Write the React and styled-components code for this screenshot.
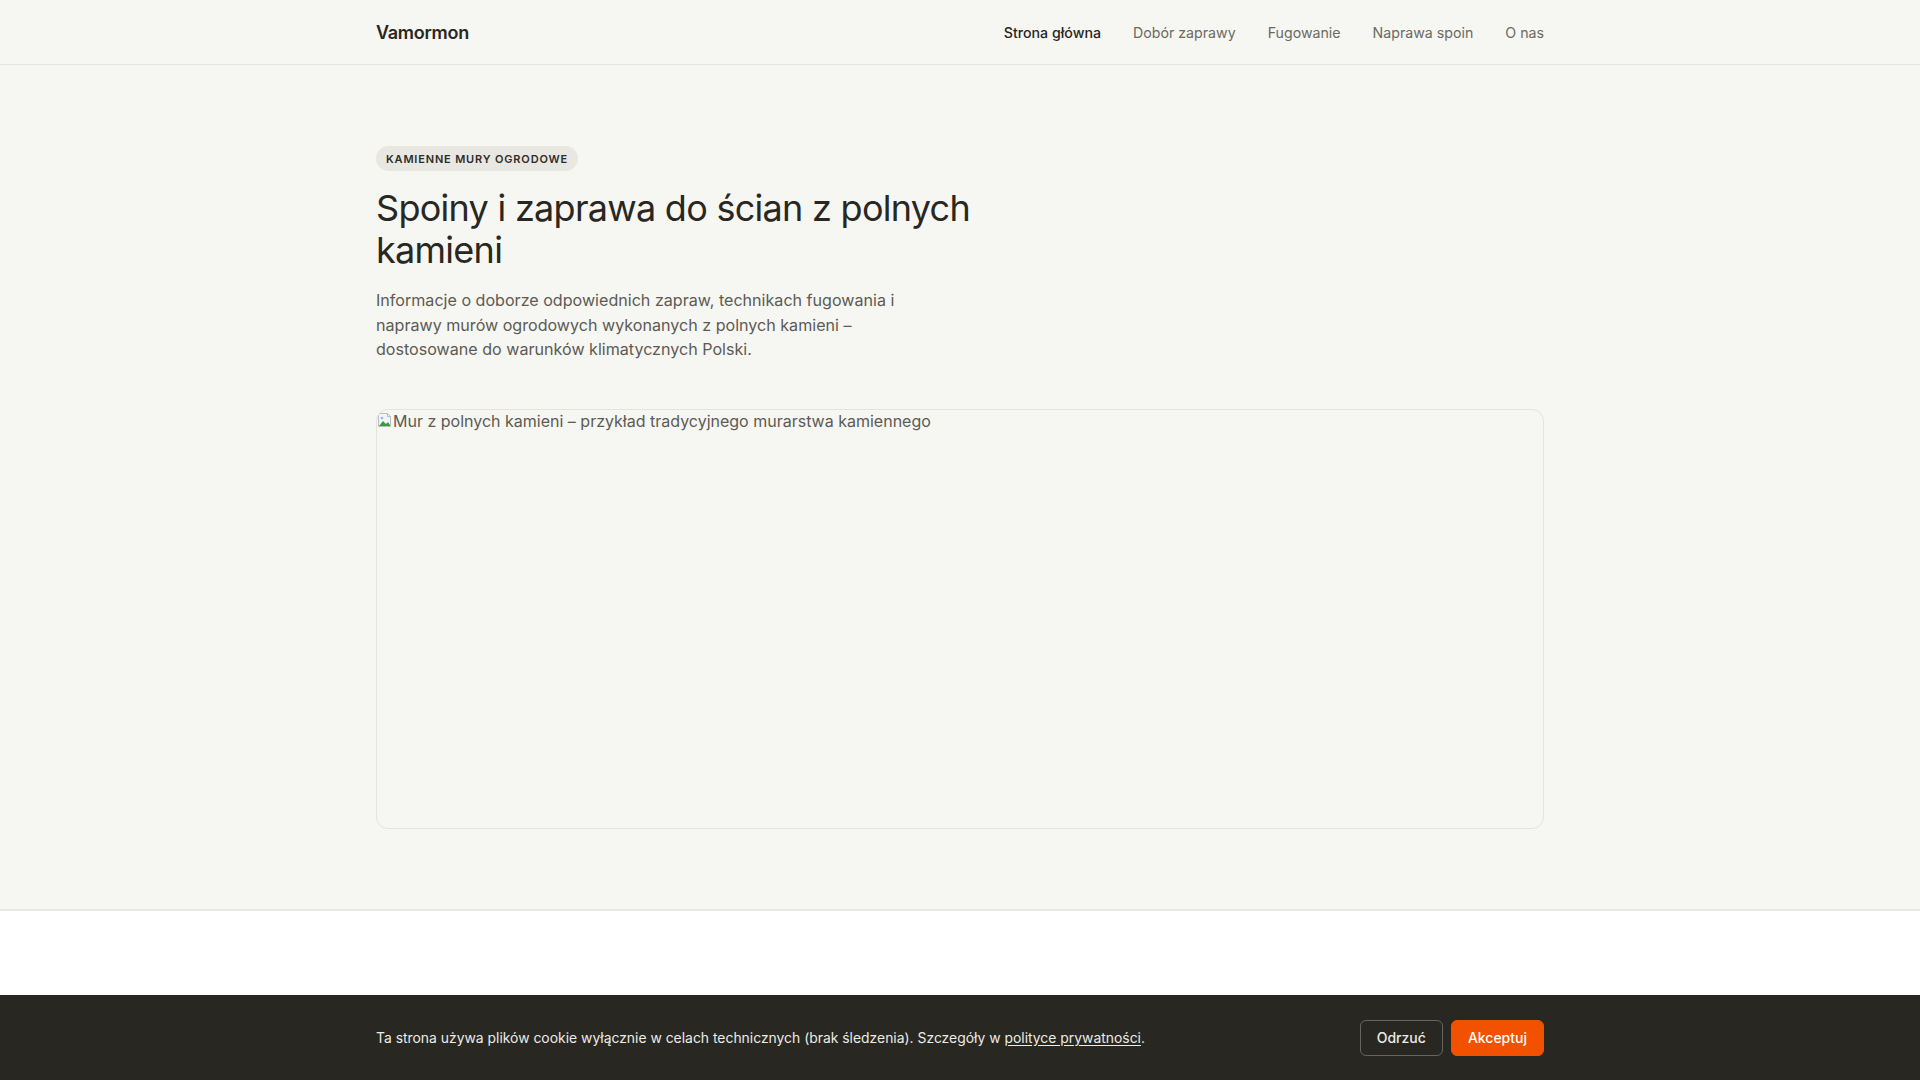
import React from "react";
import styled, { createGlobalStyle } from "styled-components";

const Global = createGlobalStyle`
  *, *::before, *::after { box-sizing: border-box; }
  html, body { margin: 0; padding: 0; }
  body {
    background: #f6f6f2;
    color: #282722;
    font-family: Inter, "Noto Sans", "Liberation Sans", sans-serif;
    -webkit-font-smoothing: antialiased;
  }
`;

const Page = styled.div`
  min-height: 100vh;
  display: flex;
  flex-direction: column;
`;

const Container = styled.div`
  width: 1168px;
  margin: 0 auto;
`;

const Header = styled.header`
  border-bottom: 1px solid #e4e3dd;
`;

const HeaderInner = styled(Container)`
  height: 64px;
  padding-top: 1px;
  display: flex;
  align-items: center;
  justify-content: space-between;
`;

const Logo = styled.a`
  font-size: 18px;
  font-weight: 600;
  color: #282722;
  text-decoration: none;
  letter-spacing: -0.015em;
`;

const Nav = styled.nav`
  display: flex;
  gap: 32px;
`;

const NavLink = styled.a`
  font-size: 14.2px;
  color: ${(p) => (p.$active ? "#282722" : "#6b6a62")};
  font-weight: ${(p) => (p.$active ? 450 : 400)};
  text-decoration: none;
`;

const Main = styled.main`
  padding: 81px 0 80px;
`;

const Badge = styled.span`
  display: inline-flex;
  align-items: center;
  height: 25px;
  padding: 0 10px;
  border-radius: 999px;
  background: #e8e7e2;
  font-size: 11px;
  font-weight: 600;
  letter-spacing: 0.075em;
  text-transform: uppercase;
  color: #2e2d28;
`;

const Title = styled.h1`
  margin: 16px 0 0;
  max-width: 680px;
  font-size: 36px;
  font-weight: 400;
  line-height: 42px;
  letter-spacing: -0.02em;
  color: #282722;
`;

const Lead = styled.p`
  margin: 17px 0 0;
  max-width: 570px;
  font-size: 16.1px;
  line-height: 24.5px;
  color: #5c5b54;
`;

const Figure = styled.div`
  margin-top: 47px;
  height: 420px;
  border: 1px solid #e4e3dd;
  border-radius: 12px;
  overflow: hidden;
`;

const Alt = styled.div`
  display: flex;
  align-items: flex-start;
  font-size: 16px;
  line-height: 20px;
  color: #5c5b54;
  padding-top: 1px;
`;

const BrokenIcon = () => (
  <svg width="16" height="16" viewBox="0 0 16 16" style={{ flex: "none", marginTop: 1 }}>
    <path d="M1.5 1.5h9l3 3v10h-12z" fill="#f2f4f8" stroke="#b7bcc6" />
    <path d="M10.5 1.5v3h3" fill="none" stroke="#b7bcc6" />
    <path d="M2 14l4-5 3 3 2-2 2.5 4z" fill="#3d9a3a" />
    <circle cx="5" cy="6" r="1.3" fill="#8fb8e8" />
  </svg>
);

const Footer = styled.footer`
  flex: 1;
  min-height: 180px;
  background: #ffffff;
  border-top: 2px solid #e9e8e3;
`;

const CookieBar = styled.div`
  position: fixed;
  left: 0;
  right: 0;
  bottom: 0;
  height: 85px;
  background: #282722;
`;

const CookieInner = styled(Container)`
  height: 100%;
  display: flex;
  align-items: center;
  justify-content: space-between;
`;

const CookieText = styled.p`
  margin: 0;
  font-size: 13.9px;
  color: #ecebe5;
  a {
    color: #ecebe5;
    text-decoration: underline;
    text-underline-offset: 2px;
  }
`;

const Actions = styled.div`
  display: flex;
  gap: 8px;
`;

const Button = styled.button`
  height: 36px;
  padding: 0 16px;
  border-radius: 6px;
  font-family: inherit;
  font-size: 14px;
  font-weight: 500;
  cursor: pointer;
  border: 1px solid ${(p) => (p.$primary ? "#f25100" : "#66655e")};
  background: ${(p) => (p.$primary ? "#f25100" : "transparent")};
  color: ${(p) => (p.$primary ? "#ffffff" : "#ecebe5")};
`;

export default function App() {
  const links = ["Strona główna", "Dobór zaprawy", "Fugowanie", "Naprawa spoin", "O nas"];
  return (
    <Page>
      <Global />
      <Header>
        <HeaderInner>
          <Logo href="#">Vamormon</Logo>
          <Nav>
            {links.map((l, i) => (
              <NavLink key={l} href="#" $active={i === 0}>
                {l}
              </NavLink>
            ))}
          </Nav>
        </HeaderInner>
      </Header>
      <Main>
        <Container>
          <Badge>Kamienne mury ogrodowe</Badge>
          <Title>Spoiny i zaprawa do ścian z polnych kamieni</Title>
          <Lead>
            Informacje o doborze odpowiednich zapraw, technikach fugowania i naprawy murów
            ogrodowych wykonanych z polnych kamieni – dostosowane do warunków klimatycznych
            Polski.
          </Lead>
          <Figure>
            <Alt>
              <BrokenIcon />
              Mur z polnych kamieni – przykład tradycyjnego murarstwa kamiennego
            </Alt>
          </Figure>
        </Container>
      </Main>
      <Footer />
      <CookieBar>
        <CookieInner>
          <CookieText>
            Ta strona używa plików cookie wyłącznie w celach technicznych (brak śledzenia).
            Szczegóły w <a href="#">polityce prywatności</a>.
          </CookieText>
          <Actions>
            <Button>Odrzuć</Button>
            <Button $primary>Akceptuj</Button>
          </Actions>
        </CookieInner>
      </CookieBar>
    </Page>
  );
}
